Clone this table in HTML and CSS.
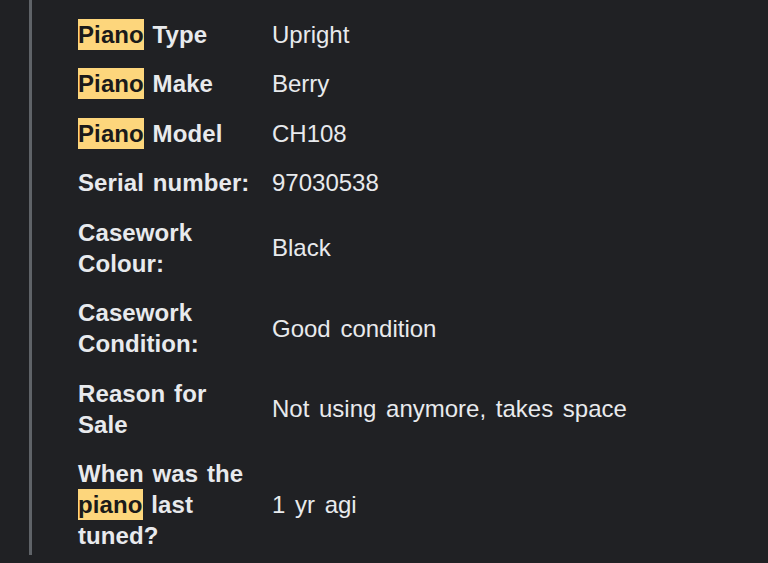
FILE: index.html
```
<!DOCTYPE html>
<html>
<head>
<meta charset="utf-8">
<link rel="stylesheet" href="styles.css">
</head>
<body>
<div class="wrap">
  <div class="rule"></div>
  <div class="table">
    <div class="label"><mark class="hl">Piano</mark> Type</div><div class="value">Upright</div>
    <div class="label"><mark class="hl">Piano</mark> Make</div><div class="value">Berry</div>
    <div class="label"><mark class="hl">Piano</mark> Model</div><div class="value">CH108</div>
    <div class="label">Serial number:</div><div class="value">97030538</div>
    <div class="label">Casework Colour:</div><div class="value">Black</div>
    <div class="label">Casework Condition:</div><div class="value">Good condition</div>
    <div class="label">Reason for Sale</div><div class="value">Not using anymore, takes space</div>
    <div class="label">When was the <mark class="hl">piano</mark> last tuned?</div><div class="value">1 yr agi</div>
  </div>
</div>
</body>
</html>
```
FILE: styles.css
```
html, body {
  margin: 0;
  padding: 0;
  background: #202124;
  height: 563px;
  overflow: hidden;
}
body {
  font-family: "Liberation Sans", Arial, sans-serif;
  color: #e8eaed;
  font-size: 24px;
  line-height: 31px;
}
.wrap {
  display: flex;
  align-items: flex-start;
  padding-left: 29px;
}
.rule {
  width: 3px;
  height: 555px;
  background: #5f6368;
  flex: none;
}
.table {
  display: grid;
  grid-template-columns: 194px auto;
  margin-left: 46px;
  padding-top: 9.5px;
}
.label, .value {
  padding: 9px 0 9.5px;
  display: flex;
  align-items: center;
}
.label {
  display: block;
  font-weight: bold;
  padding-right: 20px;
  word-spacing: 2px;
  letter-spacing: 0.1px;
}
.value {
  word-spacing: 3px;
}
.hl {
  background: #fdd67c;
  color: #1a1a1a;
  padding: 2px 0 2px;
}
```
